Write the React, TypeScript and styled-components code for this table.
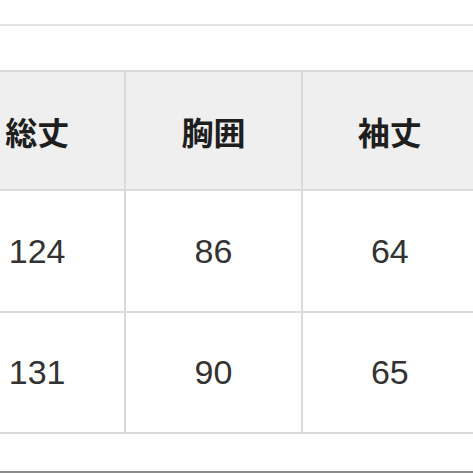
import React from 'react'
import styled, { createGlobalStyle } from 'styled-components'

const GlobalStyle = createGlobalStyle`
    html, body {
        margin: 0;
        padding: 0;
        background-color: #ffffff;
        overflow: hidden;
    }
`

const StyledMain = styled.main`
    display: flex;
    flex-direction: column;
    width: 473px;
    height: 473px;
    overflow: hidden;
    background-color: #ffffff;
`

const TopRule = styled.div`
    margin-top: 24px;
    height: 2px;
    background-color: #e2e2e2;
    flex-shrink: 0;
`

const SizeTable = styled.table`
    align-self: flex-start;
    width: 531px;
    min-width: 531px;
    margin-top: 44px;
    margin-left: -52px;
    border-collapse: separate;
    border-spacing: 0;
    table-layout: fixed;
    border-top: 2px solid #dadada;
    border-left: 2px solid #dadada;
    flex-shrink: 0;
`

const HeadCell = styled.th`
    height: 117px;
    padding: 0;
    background-color: #efefef;
    border-right: 2px solid #dadada;
    border-bottom: 2px solid #dadada;
    color: #1e1e1e;
    font-family: 'Noto Sans CJK JP', 'Noto Sans', sans-serif;
    font-size: 32px;
    font-weight: 700;
    text-align: center;
    vertical-align: middle;
`

const BodyCell = styled.td<{ $height: number }>`
    height: ${(p) => p.$height}px;
    padding: 0;
    background-color: #ffffff;
    border-right: 2px solid #dadada;
    border-bottom: 2px solid #dadada;
    color: #333333;
    font-family: 'Liberation Sans', Arial, sans-serif;
    font-size: 34px;
    text-align: center;
    vertical-align: middle;
`

const BottomRule = styled.div`
    margin-top: 37px;
    height: 2px;
    background-color: #8c8c8c;
    flex-shrink: 0;
`

const headers = ['総丈', '胸囲', '袖丈']

const rows = [
    { key: 'a', height: 120, values: ['124', '86', '64'] },
    { key: 'b', height: 119, values: ['131', '90', '65'] },
]

const App = (): JSX.Element => {
    return (
        <StyledMain>
            <GlobalStyle />
            <TopRule />
            <SizeTable>
                <thead>
                    <tr>
                        {headers.map((h) => (
                            <HeadCell key={h}>{h}</HeadCell>
                        ))}
                    </tr>
                </thead>
                <tbody>
                    {rows.map((row) => (
                        <tr key={row.key}>
                            {row.values.map((v, i) => (
                                <BodyCell key={i} $height={row.height}>
                                    {v}
                                </BodyCell>
                            ))}
                        </tr>
                    ))}
                </tbody>
            </SizeTable>
            <BottomRule />
        </StyledMain>
    )
}

export default App
